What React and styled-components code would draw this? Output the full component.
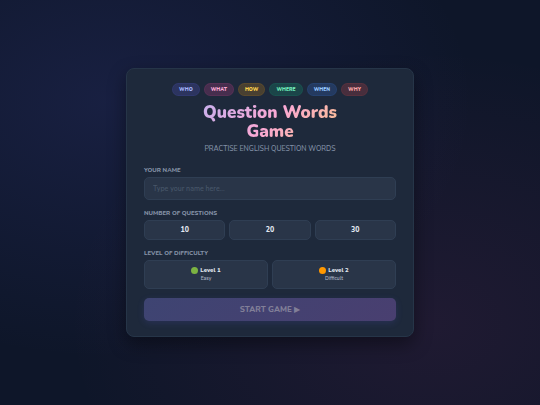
import React, { useState } from 'react';
import styled, { createGlobalStyle } from 'styled-components';

const WORDS = [
  { text: 'WHO', color: '#a5b4fc', rgb: '99, 102, 241' },
  { text: 'WHAT', color: '#f9a8d4', rgb: '236, 72, 153' },
  { text: 'HOW', color: '#fcd34d', rgb: '245, 158, 11' },
  { text: 'WHERE', color: '#6ee7b7', rgb: '16, 185, 129' },
  { text: 'WHEN', color: '#93c5fd', rgb: '59, 130, 246' },
  { text: 'WHY', color: '#fca5a5', rgb: '239, 68, 68' },
];

const AMOUNTS = [10, 20, 30];

const LEVELS = [
  { id: 1, name: 'Level 1', hint: 'Easy', dot: '#7cb342' },
  { id: 2, name: 'Level 2', hint: 'Difficult', dot: '#ff9800' },
];

function App() {
  const [name, setName] = useState('');
  const [amount, setAmount] = useState(null);
  const [level, setLevel] = useState(null);

  const ready = name.trim() !== '' && amount !== null && level !== null;

  return (
    <Page>
      <GlobalStyle />
      <Card>
        <Pills>
          {WORDS.map((word) => (
            <Pill key={word.text} $color={word.color} $rgb={word.rgb}>
              {word.text}
            </Pill>
          ))}
        </Pills>
        <Title>
          Question Words
          <br />
          Game
        </Title>
        <Subtitle>PRACTISE ENGLISH QUESTION WORDS</Subtitle>

        <Field>
          <Label htmlFor="player">YOUR NAME</Label>
          <NameInput
            id="player"
            type="text"
            placeholder="Type your name here..."
            value={name}
            onChange={(e) => setName(e.target.value)}
          />
        </Field>

        <Field role="group" aria-labelledby="amount">
          <Label as="span" id="amount">NUMBER OF QUESTIONS</Label>
          <Options>
            {AMOUNTS.map((n) => (
              <Option
                key={n}
                type="button"
                aria-pressed={amount === n}
                $active={amount === n}
                onClick={() => setAmount(n)}
              >
                {n}
              </Option>
            ))}
          </Options>
        </Field>

        <Field role="group" aria-labelledby="level">
          <Label as="span" id="level">LEVEL OF DIFFICULTY</Label>
          <Options>
            {LEVELS.map((item) => (
              <LevelOption
                key={item.id}
                type="button"
                aria-pressed={level === item.id}
                $active={level === item.id}
                onClick={() => setLevel(item.id)}
              >
                <LevelName>
                  <Dot $color={item.dot} />
                  {item.name}
                </LevelName>
                <Hint>{item.hint}</Hint>
              </LevelOption>
            ))}
          </Options>
        </Field>

        <StartButton type="button" disabled={!ready}>START GAME ▶</StartButton>
      </Card>
    </Page>
  );
}

export default App;

const GlobalStyle = createGlobalStyle`
  * {
    box-sizing: border-box;
  }

  body {
    margin: 0;
    background: #0f172a;
    color: #f1f5f9;
    font-family: Nunito, 'Open Sans', 'DejaVu Sans', sans-serif;
  }

  button, input {
    font-family: inherit;
  }
`;

const Page = styled.main`
  min-height: 100vh;
  display: flex;
  align-items: center;
  justify-content: center;
  background:
    radial-gradient(ellipse at 20% 25%, rgba(99, 102, 241, 0.12) 0%, transparent 60%),
    radial-gradient(ellipse at 80% 80%, rgba(236, 72, 153, 0.08) 0%, transparent 60%),
    #0e1629;
`;

const Card = styled.section`
  width: 100%;
  max-width: 288px;
  padding: 14px 17px 15px;
  border: 1px solid #263548;
  border-radius: 8px;
  background: #1e293b;
  box-shadow: 0 7px 18px rgba(0, 0, 0, 0.4);
`;

const Pills = styled.div`
  display: flex;
  justify-content: center;
  gap: 4px;
  margin-bottom: 7px;
`;

const Pill = styled.span`
  padding: 0 6px;
  border: 1px solid rgba(${(props) => props.$rgb}, 0.1);
  border-radius: 7px;
  background: rgba(${(props) => props.$rgb}, 0.2);
  color: ${(props) => props.$color};
  font-size: 5px;
  font-weight: 900;
  line-height: 11px;
`;

const Title = styled.h1`
  margin: 0;
  background: linear-gradient(135deg, #a5b4fc 0%, #f9a8d4 50%, #fcd34d 100%);
  background-clip: text;
  -webkit-background-clip: text;
  color: transparent;
  font-size: 17px;
  font-weight: 900;
  line-height: 19px;
  text-align: center;
`;

const Subtitle = styled.p`
  margin: 3px 0 12px;
  color: #8391a7;
  font-size: 7px;
  font-weight: 500;
  line-height: 10px;
  text-align: center;
`;

const Field = styled.div`
  margin-bottom: 9px;
`;

const Label = styled.label`
  display: block;
  margin-bottom: 3px;
  color: #8592a7;
  font-size: 6px;
  font-weight: 800;
  line-height: 8px;
`;

const NameInput = styled.input`
  display: block;
  width: 100%;
  height: 23px;
  padding: 0 8px;
  border: 1px solid #2f3e53;
  border-radius: 5px;
  outline: none;
  background: #293548;
  color: #f1f5f9;
  font-size: 7px;
  font-weight: 600;

  &::placeholder {
    color: #475569;
    opacity: 1;
  }

  &:focus {
    border-color: #6366f1;
  }
`;

const Options = styled.div`
  display: flex;
  gap: 4px;
`;

const Option = styled.button`
  flex: 1;
  padding: 4px;
  border: 1px solid ${(props) => (props.$active ? '#6366f1' : '#2f3e53')};
  border-radius: 5px;
  background: #293548;
  color: #e2e8f0;
  font-size: 7px;
  font-weight: 800;
  line-height: 10px;
  cursor: pointer;
`;

const LevelOption = styled(Option)`
  display: flex;
  flex-direction: column;
  align-items: center;
  padding: 4px 4px 6px;
  font-size: 6px;
`;

const LevelName = styled.span`
  display: flex;
  align-items: center;
  gap: 2px;
`;

const Dot = styled.span`
  width: 7px;
  height: 7px;
  border-radius: 50%;
  background: ${(props) => props.$color};
`;

const Hint = styled.span`
  color: #a9b4c4;
  font-size: 5px;
  font-weight: 600;
  line-height: 7px;
`;

const StartButton = styled.button`
  display: block;
  width: 100%;
  padding: 0;
  border: 0;
  border-radius: 5px;
  background: linear-gradient(135deg, #6366f1, #8b5cf6);
  box-shadow: 0 2px 7px rgba(99, 102, 241, 0.4);
  color: #fff;
  font-size: 8px;
  font-weight: 800;
  line-height: 23px;
  cursor: pointer;

  &:disabled {
    background: linear-gradient(135deg, #3e4472, #493f70);
    box-shadow: 0 2px 7px rgba(99, 102, 241, 0.15);
    color: #817f98;
    cursor: not-allowed;
  }
`;
